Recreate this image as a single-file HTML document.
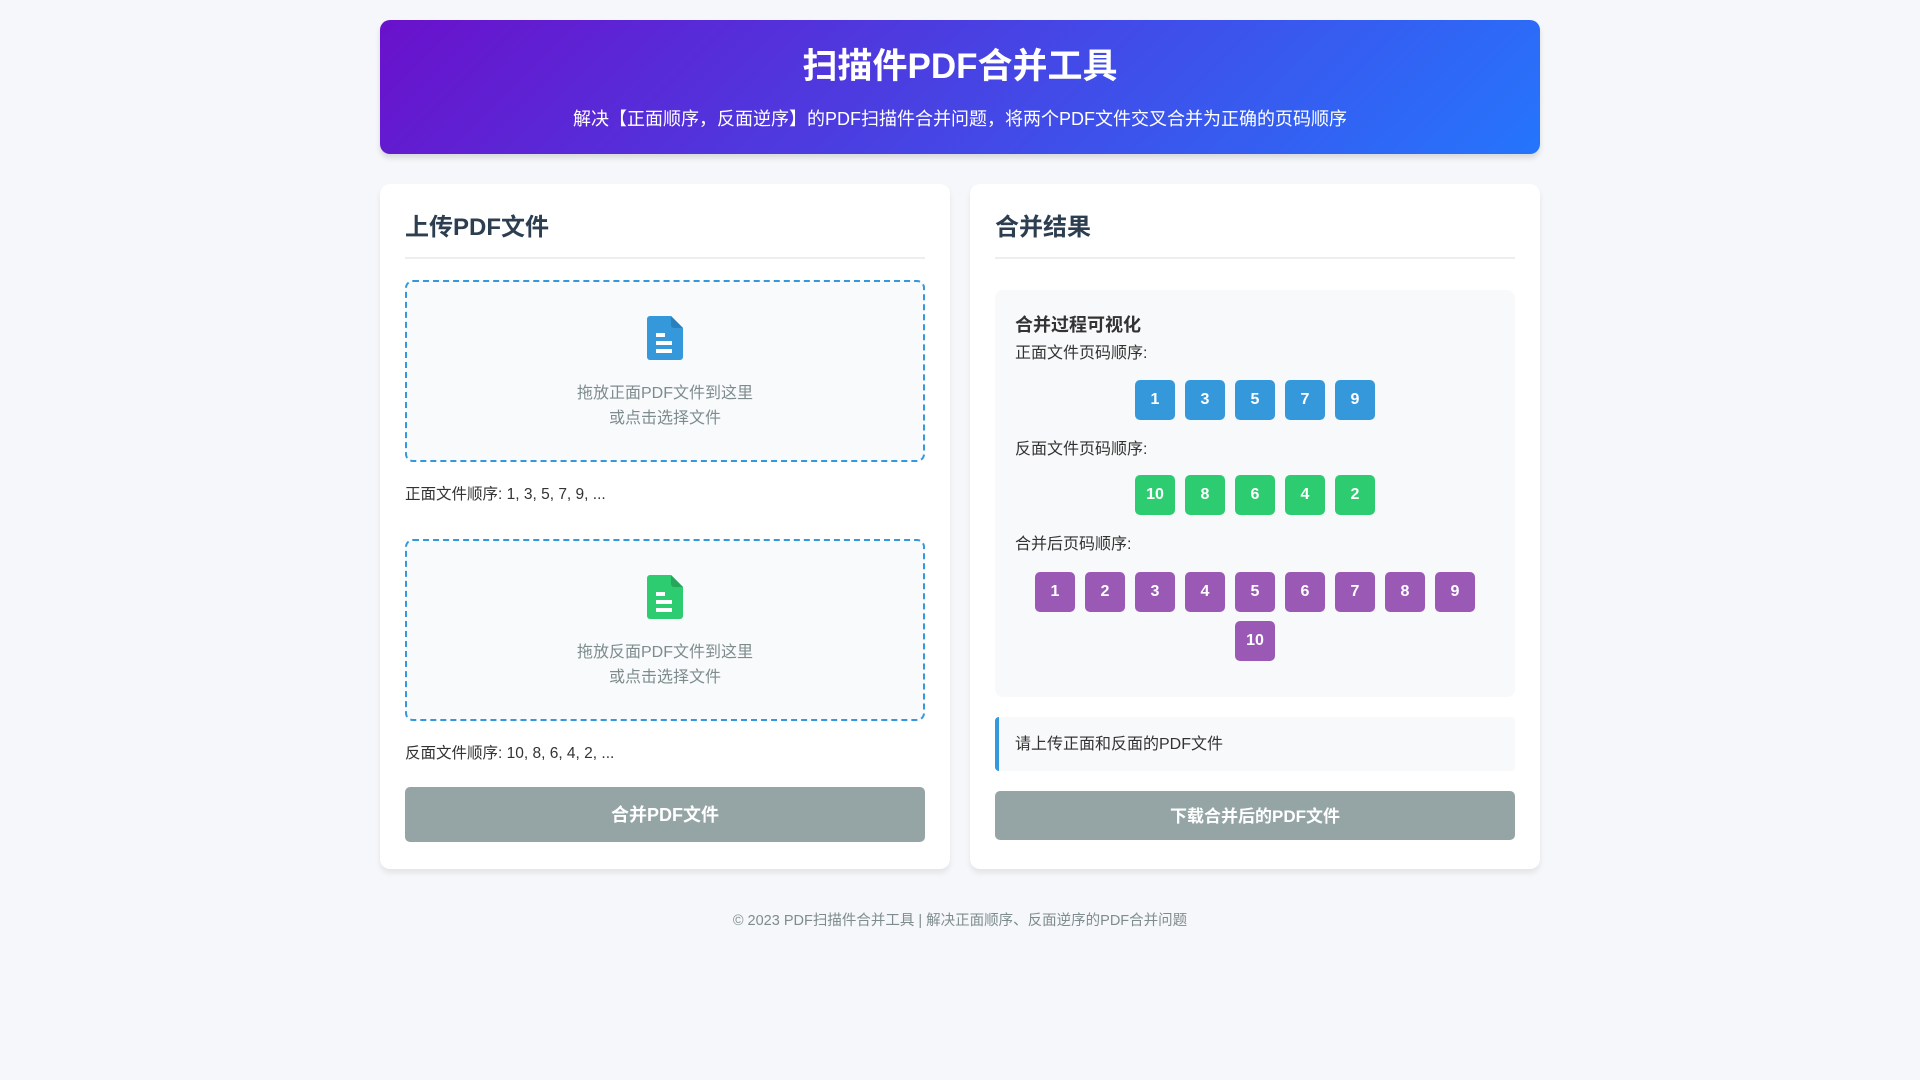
<!DOCTYPE html>
<html><head><meta charset="utf-8"><style>
*{box-sizing:border-box;margin:0;padding:0}
body{width:1920px;height:1080px;background:#f5f7fa;font-family:"Liberation Sans","Noto Sans CJK SC",sans-serif;color:#333;position:relative;overflow:hidden}
.abs{position:absolute}
.header{left:380px;top:20px;width:1160px;height:134px;border-radius:10px;background:linear-gradient(135deg,#6a11cb 0%,#2575fc 100%);box-shadow:0 4px 6px rgba(0,0,0,.12);color:#fff;text-align:center}
.header h1{position:absolute;left:0;right:0;top:29px;font-size:35px;line-height:36px;font-weight:bold}
.header p{position:absolute;left:0;right:0;top:88px;font-size:18px;line-height:22px}
.card{top:184px;width:570px;height:685px;background:#fff;border-radius:10px;box-shadow:0 4px 6px rgba(0,0,0,.08)}
.line{height:2px;background:#eee;width:520px;left:25px;top:73px}
.drop{left:25px;width:520px;height:182px;border:2px dashed #3498db;border-radius:8px;background:#f8fafc;text-align:center;color:#7f8c8d;font-size:16px;line-height:25px}
.drop .t{position:absolute;left:0;right:0;top:99px}
.info{left:25px;font-size:15.5px;color:#333}
.btn{left:25px;width:520px;background:#95a5a6;color:#fff;font-weight:bold;border-radius:5px;text-align:center;font-size:18px}
.viz{left:25px;top:106px;width:520px;height:407px;background:#f8f9fa;border-radius:8px}
.lbl{left:20px;font-size:16px;color:#333}
.row{left:0;width:520px;display:flex;flex-wrap:wrap;justify-content:center;gap:9px 10px;padding:0 30px}
.b{width:40px;height:40px;border-radius:5px;color:#fff;font-weight:bold;font-size:16px;display:flex;align-items:center;justify-content:center}
.bl{background:#3498db}.gr{background:#2ecc71}.pu{background:#9b59b6}
</style></head><body>
<div class="abs header"><h1>扫描件PDF合并工具</h1><p>解决【正面顺序，反面逆序】的PDF扫描件合并问题，将两个PDF文件交叉合并为正确的页码顺序</p></div>

<div class="abs card" style="left:380px">
<div class="abs" style="left:25px;top:23px;font-size:24px;font-weight:bold;color:#2c3e50">上传PDF文件</div>
<div class="abs line"></div>
<div class="abs drop" style="top:96px">
<svg class="abs" style="left:240px;top:34px" width="36" height="44" viewBox="0 0 36 44"><path d="M3 0H24L36 12V41a3 3 0 0 1-3 3H3a3 3 0 0 1-3-3V3a3 3 0 0 1 3-3z" fill="#3498db"/><path d="M24 0L36 12H27a3 3 0 0 1-3-3z" fill="#2a7fbd"/><rect x="9" y="17" width="9" height="4" fill="#fff"/><rect x="9" y="25" width="16" height="4" fill="#fff"/><rect x="9" y="33" width="16" height="4" fill="#fff"/></svg>
<div class="t">拖放正面PDF文件到这里<br>或点击选择文件</div></div>
<div class="abs info" style="top:298px">正面文件顺序: 1, 3, 5, 7, 9, ...</div>
<div class="abs drop" style="top:355px">
<svg class="abs" style="left:240px;top:34px" width="36" height="44" viewBox="0 0 36 44"><path d="M3 0H24L36 12V41a3 3 0 0 1-3 3H3a3 3 0 0 1-3-3V3a3 3 0 0 1 3-3z" fill="#2ecc71"/><path d="M24 0L36 12H27a3 3 0 0 1-3-3z" fill="#26a65b"/><rect x="9" y="17" width="9" height="4" fill="#fff"/><rect x="9" y="25" width="16" height="4" fill="#fff"/><rect x="9" y="33" width="16" height="4" fill="#fff"/></svg>
<div class="t">拖放反面PDF文件到这里<br>或点击选择文件</div></div>
<div class="abs info" style="top:557px">反面文件顺序: 10, 8, 6, 4, 2, ...</div>
<div class="abs btn" style="top:603px;height:55px;line-height:57px">合并PDF文件</div>
</div>

<div class="abs card" style="left:970px">
<div class="abs" style="left:25px;top:23px;font-size:24px;font-weight:bold;color:#2c3e50">合并结果</div>
<div class="abs line"></div>
<div class="abs viz">
<div class="abs lbl" style="top:21px;font-size:18px;font-weight:bold">合并过程可视化</div>
<div class="abs lbl" style="top:49px">正面文件页码顺序:</div>
<div class="abs row" style="top:90px"><div class="b bl">1</div><div class="b bl">3</div><div class="b bl">5</div><div class="b bl">7</div><div class="b bl">9</div></div>
<div class="abs lbl" style="top:145px">反面文件页码顺序:</div>
<div class="abs row" style="top:185px"><div class="b gr">10</div><div class="b gr">8</div><div class="b gr">6</div><div class="b gr">4</div><div class="b gr">2</div></div>
<div class="abs lbl" style="top:240px">合并后页码顺序:</div>
<div class="abs row" style="top:282px"><div class="b pu">1</div><div class="b pu">2</div><div class="b pu">3</div><div class="b pu">4</div><div class="b pu">5</div><div class="b pu">6</div><div class="b pu">7</div><div class="b pu">8</div><div class="b pu">9</div><div class="b pu">10</div></div>
</div>
<div class="abs" style="left:25px;top:533px;width:520px;height:54px;background:#f8f9fa;border-left:4px solid #3498db;border-radius:4px;font-size:16px;line-height:56px;padding-left:16px">请上传正面和反面的PDF文件</div>
<div class="abs btn" style="top:607px;height:49px;line-height:51px;font-size:17px">下载合并后的PDF文件</div>
</div>

<div class="abs" style="left:0;width:1920px;top:909px;text-align:center;font-size:14.5px;color:#7f8c8d">© 2023 PDF扫描件合并工具 | 解决正面顺序、反面逆序的PDF合并问题</div>
</body></html>
